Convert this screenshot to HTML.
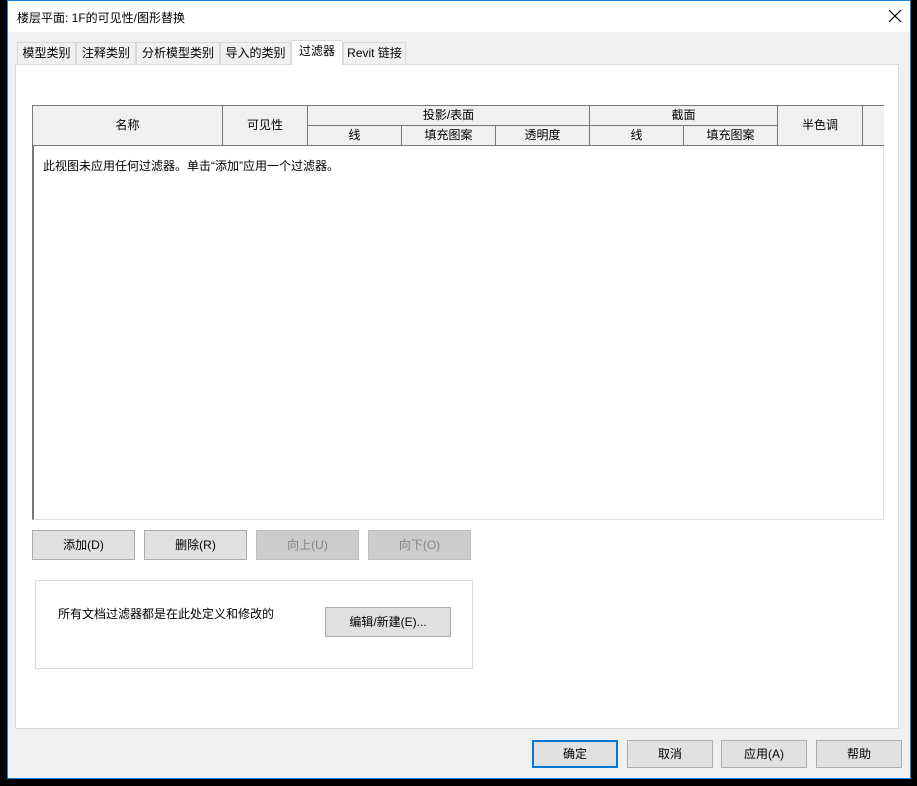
<!DOCTYPE html>
<html><head><meta charset="utf-8"><style>
*{box-sizing:border-box;margin:0;padding:0}
body{width:917px;height:786px;background:#000;position:relative;overflow:hidden;font-family:"Liberation Sans","Noto Sans CJK SC",sans-serif;font-size:12px;color:#000}
.a{position:absolute}
.dlg{left:7px;top:0;width:904px;height:779px;background:#f0f0f0;border:1px solid #1883d7}
.title{left:0;top:0;width:902px;height:31px;background:#fff}
.tab{top:42px;height:22px;background:#f0f0f0;border:1px solid #d9d9d9;border-bottom:none;text-align:center;line-height:21px;font-size:12px}
.sel{top:40px;height:25px;background:#fff;z-index:2}
.panel{left:15px;top:64px;width:884px;height:665px;background:#fff;border:1px solid #d9d9d9}
.h{background:#f0f0f0;border:1px solid #777;text-align:center;font-size:12px}
.btn{height:30px;background:#e1e1e1;border:1px solid #adadad;text-align:center;line-height:28px}
.bb{height:28px;line-height:26px}
.dis{background:#cccccc;border-color:#bfbfbf;color:#838383}
</style></head><body>
<div class="a dlg">
<div class="a title"></div>
<div class="a" style="left:9px;top:8px;font-size:12px">楼层平面: 1F的可见性/图形替换</div>
<svg class="a" style="left:880px;top:8px" width="14" height="14"><path d="M1 1L13 13M13 1L1 13" stroke="#000" stroke-width="1.2"/></svg>
</div>
<div class="a panel"></div>
<div class="a tab" style="left:17px;width:59px">模型类别</div>
<div class="a tab" style="left:76px;width:60px">注释类别</div>
<div class="a tab" style="left:136px;width:84px">分析模型类别</div>
<div class="a tab" style="left:220px;width:71px">导入的类别</div>
<div class="a tab sel" style="left:291px;width:52px">过滤器</div>
<div class="a tab" style="left:343px;width:63px">Revit 链接</div>

<div class="a" style="left:32px;top:105px;width:852px;height:415px;background:#fff;border-left:2px solid #777;border-top:1px solid #777;border-bottom:1px solid #ddd;border-right:1px solid #ddd"></div>
<div class="a h" style="left:32px;top:105px;width:191px;height:41px;line-height:39px">名称</div>
<div class="a h" style="left:222px;top:105px;width:86px;height:41px;line-height:39px">可见性</div>
<div class="a h" style="left:307px;top:105px;width:283px;height:21px;line-height:19px">投影/表面</div>
<div class="a h" style="left:307px;top:125px;width:95px;height:21px;line-height:19px">线</div>
<div class="a h" style="left:401px;top:125px;width:95px;height:21px;line-height:19px">填充图案</div>
<div class="a h" style="left:495px;top:125px;width:95px;height:21px;line-height:19px">透明度</div>
<div class="a h" style="left:589px;top:105px;width:189px;height:21px;line-height:19px">截面</div>
<div class="a h" style="left:589px;top:125px;width:95px;height:21px;line-height:19px">线</div>
<div class="a h" style="left:683px;top:125px;width:95px;height:21px;line-height:19px">填充图案</div>
<div class="a h" style="left:777px;top:105px;width:86px;height:41px;line-height:39px">半色调</div>
<div class="a h" style="left:862px;top:105px;width:22px;height:41px;border-right:none"></div>
<div class="a" style="left:43px;top:157px">此视图未应用任何过滤器。单击“添加”应用一个过滤器。</div>

<div class="a btn" style="left:32px;top:530px;width:103px">添加(D)</div>
<div class="a btn" style="left:144px;top:530px;width:103px">删除(R)</div>
<div class="a btn dis" style="left:256px;top:530px;width:103px">向上(U)</div>
<div class="a btn dis" style="left:368px;top:530px;width:103px">向下(O)</div>

<div class="a" style="left:35px;top:580px;width:438px;height:89px;border:1px solid #dcdcdc"></div>
<div class="a" style="left:58px;top:605px">所有文档过滤器都是在此处定义和修改的</div>
<div class="a btn" style="left:325px;top:607px;width:126px">编辑/新建(E)...</div>

<div class="a btn bb" style="left:532px;top:740px;width:86px;border:2px solid #0078d7;line-height:24px">确定</div>
<div class="a btn bb" style="left:627px;top:740px;width:86px">取消</div>
<div class="a btn bb" style="left:721px;top:740px;width:86px">应用(A)</div>
<div class="a btn bb" style="left:816px;top:740px;width:86px">帮助</div>
</body></html>
